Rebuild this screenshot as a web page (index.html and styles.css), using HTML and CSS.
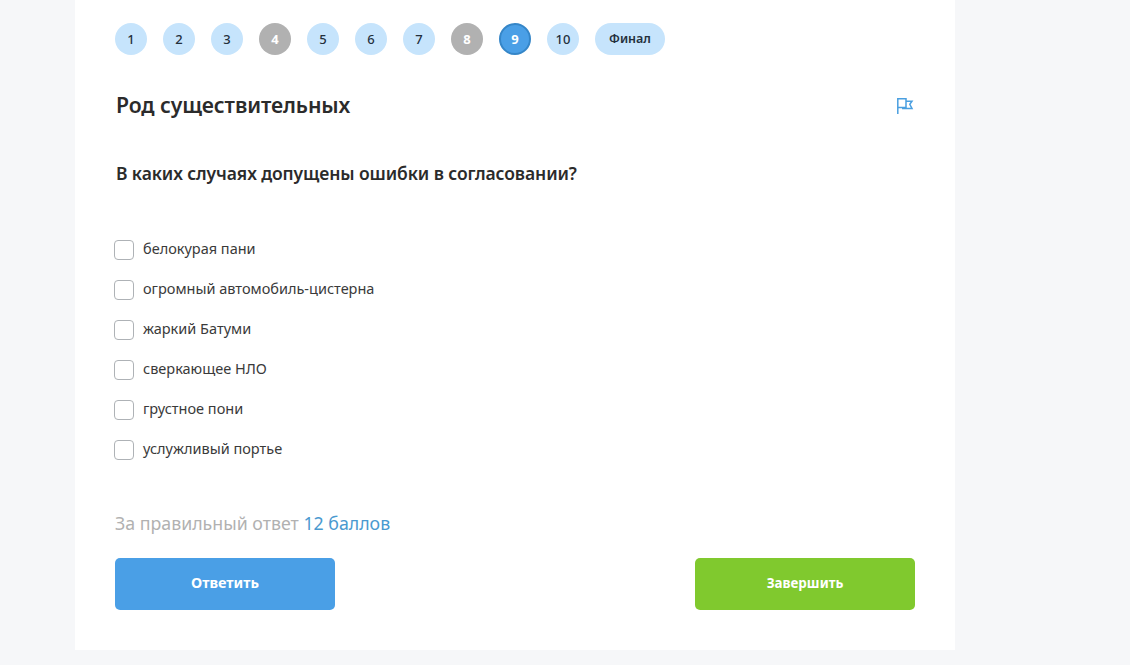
FILE: index.html
```html
<!DOCTYPE html>
<html lang="ru">
<head>
<meta charset="utf-8">
<title>Тест</title>
<link rel="stylesheet" href="styles.css">
</head>
<body>
<main class="card">
  <nav class="steps">
    <a class="step">1</a>
    <a class="step">2</a>
    <a class="step">3</a>
    <a class="step step-seen">4</a>
    <a class="step">5</a>
    <a class="step">6</a>
    <a class="step">7</a>
    <a class="step step-seen">8</a>
    <a class="step step-current">9</a>
    <a class="step">10</a>
    <a class="step step-final">Финал</a>
  </nav>
  <header class="head">
    <h1 class="title">Род существительных</h1>
    <svg class="flag" width="18" height="18" viewBox="0 0 18 18" fill="none" stroke="#4a9fe0" stroke-width="1.5">
      <path d="M1.8 17V1.8H10V10.5H1.8"/>
      <path d="M10 4.2H16L13.8 7.4L16 11.4H6.8V10.5"/>
    </svg>
  </header>
  <h2 class="question">В каких случаях допущены ошибки в согласовании?</h2>
  <ul class="options">
    <li class="option"><span class="box"></span>белокурая пани</li>
    <li class="option"><span class="box"></span>огромный автомобиль-цистерна</li>
    <li class="option"><span class="box"></span>жаркий Батуми</li>
    <li class="option"><span class="box"></span>сверкающее НЛО</li>
    <li class="option"><span class="box"></span>грустное пони</li>
    <li class="option"><span class="box"></span>услужливый портье</li>
  </ul>
  <p class="score">За правильный ответ <span class="points">12 баллов</span></p>
  <div class="actions">
    <button class="btn btn-answer">Ответить</button>
    <button class="btn btn-finish">Завершить</button>
  </div>
</main>
</body>
</html>
```

FILE: styles.css
```css
* { box-sizing: border-box; }
html, body { margin: 0; height: 665px; overflow: hidden; }
body {
  background: #f6f7f9;
  font-family: "Noto Sans", "Open Sans", sans-serif;
  color: #2b2b2b;
}
.card {
  width: 880px;
  height: 650px;
  margin-left: 75px;
  background: #fff;
  padding: 23px 40px 0;
}
.steps { display: flex; gap: 16px; }
.step {
  width: 32px;
  height: 32px;
  border-radius: 16px;
  background: #c6e4fc;
  color: #24303c;
  font-size: 13px;
  font-weight: 500;
  padding-bottom: 1px;
  display: flex;
  align-items: center;
  justify-content: center;
}
.step-seen { background: #b1b1b1; color: #fff; font-weight: 700; }
.step-current { background: #4a9fe6; border: 2px solid #3586c8; color: #fff; font-weight: 700; }
.step-final { width: 70px; font-weight: 600; font-size: 12.5px; }
.head {
  display: flex;
  justify-content: space-between;
  align-items: center;
  margin-top: 33px;
  height: 32px;
}
.title { margin: 0; font-size: 21.2px; font-weight: 600; padding-left: 1px; letter-spacing: -0.1px; }
.flag { margin-right: 1px; margin-top: 4px; }
.question { margin: 40px 0 0; font-size: 17.5px; font-weight: 600; line-height: 26px; padding-left: 1px; letter-spacing: -0.1px; }
.options { list-style: none; margin: 43px 0 0; padding: 0; }
.option {
  display: flex;
  align-items: center;
  height: 40px;
  font-size: 14.5px;
  padding-bottom: 2px;
  color: #3a3a3a;
}
.box {
  width: 20px;
  height: 20px;
  margin: 3px 9px 0 -1px;
  border: 1px solid #aeb2b6;
  border-radius: 4px;
  background: #fff;
}
.score { margin: 41px 0 0; font-size: 17.75px; line-height: 26px; color: #b1b1b1; }
.points { color: #4a9ad0; }
.actions { display: flex; justify-content: space-between; margin-top: 22px; }
.btn {
  width: 220px;
  height: 52px;
  border: 0;
  border-radius: 5px;
  padding-bottom: 4px;
  color: #fff;
  font: 700 14.4px "Noto Sans", "Open Sans", sans-serif;
}
.btn-answer { background: #4a9fe6; }
.btn-finish { background: #80c92e; font-size: 13.4px; }
```
